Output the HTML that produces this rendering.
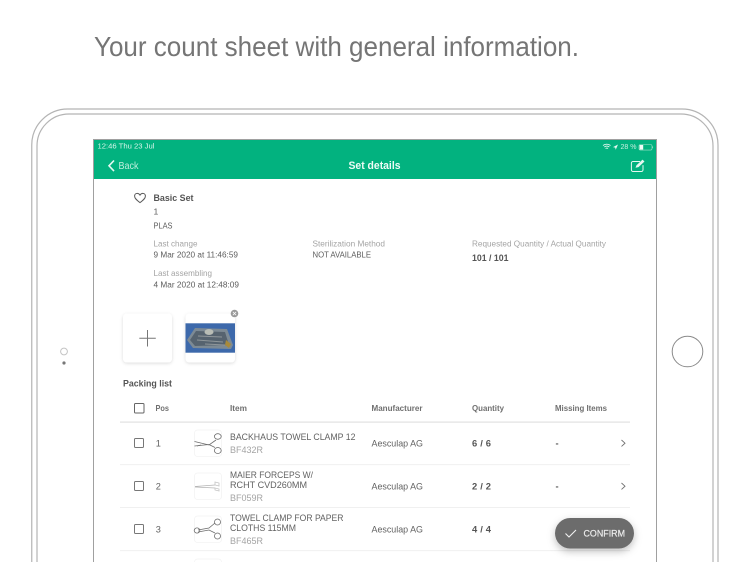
<!DOCTYPE html>
<html>
<head>
<meta charset="utf-8">
<style>
html,body{margin:0;padding:0;background:#fff;width:750px;height:562px;overflow:hidden}
svg{display:block;font-family:"Liberation Sans",sans-serif;filter:blur(.3px)}
.t{font-size:8.6px;fill:#5c5c5c}
.g{font-size:8.6px;fill:#a4a4a4}
.b{font-weight:bold;fill:#555;font-size:9.4px}
.h{font-weight:bold;fill:#707070;font-size:8.4px}
.i{font-size:9.2px;fill:#626262}
</style>
</head>
<body>
<svg width="750" height="562" viewBox="0 0 750 562" xmlns="http://www.w3.org/2000/svg">
<defs>
<filter id="s" x="-30%" y="-30%" width="160%" height="170%"><feDropShadow dx="0" dy="1" stdDeviation="1.5" flood-color="#000" flood-opacity=".14"/></filter>
<filter id="f" x="-30%" y="-50%" width="160%" height="220%"><feDropShadow dx="0" dy="3" stdDeviation="4" flood-color="#000" flood-opacity=".25"/></filter>
<clipPath id="c"><rect x="94" y="140" width="562" height="422"/></clipPath>
</defs>

<text x="94" y="56" font-size="28" fill="#757575" textLength="485" lengthAdjust="spacingAndGlyphs">Your count sheet with general information.</text>

<!-- device -->
<path d="M31.75 562V145a36 36 0 0 1 36-36H682a36 36 0 0 1 36 36V562" fill="none" stroke="#b4b4b4" stroke-width="1.2"/>
<path d="M37 562V146a32 32 0 0 1 32-32H681a32 32 0 0 1 32 32V562" fill="none" stroke="#b4b4b4" stroke-width="1.2"/>
<circle cx="64" cy="351.5" r="3.4" fill="none" stroke="#c4c4c4" stroke-width="1"/>
<circle cx="64" cy="363" r="1.6" fill="#777"/>
<circle cx="687.5" cy="351.5" r="15.3" fill="none" stroke="#8a8a8a" stroke-width="1"/>

<!-- screen -->
<rect x="93.5" y="139.5" width="563" height="430" fill="#fff" stroke="#a0a0a0" stroke-width="1"/>
<rect x="94" y="140" width="562" height="39" fill="#02b27f"/>
<g clip-path="url(#c)">
<text x="97.5" y="148.5" font-size="7" fill="#d8f5ea" textLength="57" lengthAdjust="spacingAndGlyphs">12:46  Thu 23 Jul</text>
<path d="M114 160.5l-5 5.3 5 5.3" fill="none" stroke="#e6f8f1" stroke-width="1.6"/>
<text x="118.5" y="169" font-size="9.8" fill="#bfeedd" textLength="20" lengthAdjust="spacingAndGlyphs">Back</text>
<text x="348.5" y="169" font-size="10.8" font-weight="bold" fill="#eefbf6" textLength="52" lengthAdjust="spacingAndGlyphs">Set details</text>
<!-- status right -->
<path d="M603 145.5a6 6 0 0 1 7.5 0M604.3 147a4 4 0 0 1 5 0M605.6 148.5a2 2 0 0 1 2.4 0" fill="none" stroke="#e6f8f1" stroke-width=".9"/>
<path d="M618 144.5l-5 2.6 2.2.5.5 2.2z" fill="#e6f8f1"/>
<text x="620.5" y="148.8" font-size="7" fill="#c8f0e1" textLength="16" lengthAdjust="spacingAndGlyphs">28 %</text>
<rect x="639" y="144.5" width="13" height="5.6" rx="1.5" fill="none" stroke="#9fe2c9" stroke-width=".6"/>
<rect x="639.6" y="145" width="3.6" height="4.6" fill="#f2fcf8"/>
<path d="M652.7 146.4v1.8" stroke="#9fe2c9" stroke-width=".7"/>
<!-- edit icon -->
<path d="M640 161.5h-7a1.6 1.6 0 0 0-1.6 1.6v6.8a1.6 1.6 0 0 0 1.6 1.6h8.4a1.6 1.6 0 0 0 1.6-1.6v-4.8" fill="none" stroke="#e6f8f1" stroke-width="1"/>
<path d="M635.5 167.8l1-2.6 6-5.6 2 1.9-6 5.6z" fill="#e6f8f1"/>

<!-- heart -->
<path d="M140 202.6c-3.6-2.7-5.4-4.4-5.4-6.5 0-1.6 1.2-2.7 2.6-2.7 1.2 0 2.2.7 2.8 1.7.6-1 1.6-1.7 2.8-1.7 1.4 0 2.6 1.1 2.6 2.7 0 2.1-1.8 3.8-5.4 6.5z" fill="none" stroke="#5a5a5a" stroke-width="1"/>
<text x="153.5" y="200.8" class="b" textLength="40" lengthAdjust="spacingAndGlyphs">Basic Set</text>
<text x="153.5" y="214.5" class="t">1</text>
<text x="153.5" y="228.5" class="t" textLength="19" lengthAdjust="spacingAndGlyphs">PLAS</text>
<text x="153.5" y="246.5" class="g" textLength="44" lengthAdjust="spacingAndGlyphs">Last change</text>
<text x="153.5" y="257.7" class="t" textLength="84.5" lengthAdjust="spacingAndGlyphs">9 Mar 2020 at 11:46:59</text>
<text x="153.5" y="276" class="g" textLength="58.5" lengthAdjust="spacingAndGlyphs">Last assembling</text>
<text x="153.5" y="287.5" class="t" textLength="85.5" lengthAdjust="spacingAndGlyphs">4 Mar 2020 at 12:48:09</text>
<text x="312.5" y="246.5" class="g" textLength="72.5" lengthAdjust="spacingAndGlyphs">Sterilization Method</text>
<text x="312.5" y="257.7" class="t" textLength="58.5" lengthAdjust="spacingAndGlyphs">NOT AVAILABLE</text>
<text x="472" y="246.5" class="g" textLength="134" lengthAdjust="spacingAndGlyphs">Requested Quantity / Actual Quantity</text>
<text x="472" y="261" class="b" textLength="36.5" lengthAdjust="spacingAndGlyphs">101 / 101</text>

<!-- image cards -->
<rect x="123" y="313.5" width="49" height="49" rx="4" fill="#fff" filter="url(#s)"/>
<path d="M147.5 330v16.5M139.3 338.2h16.5" stroke="#777" stroke-width="1"/>
<rect x="185.5" y="313.5" width="49.5" height="49" rx="4" fill="#fff" filter="url(#s)"/>
<rect x="185.5" y="323.3" width="49.5" height="29.4" fill="#3d69ab"/>
<path d="M187 340l8-12 32 1 6 16-2 4-38-1z" fill="#7d8a94"/>
<path d="M190 340l6-9 29 1 4 13-34 1z" fill="#56636f"/>
<ellipse cx="209" cy="332" rx="4.5" ry="3" fill="#b9bdb6"/>
<path d="M198 336l24 1M197 340l26 2M205 344l20 1" stroke="#8f969a" stroke-width="1"/>
<path d="M226 340l5 4-2 4-4-3z" fill="#a98a3a"/>
<circle cx="234.5" cy="313.5" r="3.8" fill="#9a9a9a"/>
<path d="M232.9 311.9l3.2 3.2M236.1 311.9l-3.2 3.2" stroke="#fff" stroke-width=".8"/>

<text x="123" y="386.3" class="b" textLength="49" lengthAdjust="spacingAndGlyphs">Packing list</text>

<!-- table head -->
<rect x="134.5" y="403.5" width="9.5" height="9.5" rx="1" fill="none" stroke="#666" stroke-width="1"/>
<text x="155.5" y="411" class="h" textLength="13.5" lengthAdjust="spacingAndGlyphs">Pos</text>
<text x="230" y="411" class="h" textLength="17" lengthAdjust="spacingAndGlyphs">Item</text>
<text x="371.5" y="411" class="h" textLength="51" lengthAdjust="spacingAndGlyphs">Manufacturer</text>
<text x="472" y="411" class="h" textLength="32" lengthAdjust="spacingAndGlyphs">Quantity</text>
<text x="555" y="411" class="h" textLength="52" lengthAdjust="spacingAndGlyphs">Missing Items</text>
<rect x="120" y="421.5" width="510" height="1.2" fill="#e2e2e2"/>

<!-- rows -->
<g fill="none" stroke="#777" stroke-width="1">
<rect x="134.5" y="438.5" width="9" height="9" rx="1"/>
<rect x="134.5" y="481.5" width="9" height="9" rx="1"/>
<rect x="134.5" y="524.5" width="9" height="9" rx="1"/>
</g>
<text x="155.8" y="446.3" class="i">1</text>
<text x="155.8" y="489.3" class="i">2</text>
<text x="155.8" y="532.5" class="i">3</text>

<g fill="none" stroke="#f3f3f3" stroke-width=".8">
<rect x="194.5" y="430" width="27" height="26.5" rx="3"/>
<rect x="194.5" y="473" width="27" height="26.5" rx="3"/>
<rect x="194.5" y="516" width="27" height="26.5" rx="3"/>
<rect x="194.5" y="559" width="27" height="26.5" rx="3"/>
</g>
<!-- clamp 1 -->
<g fill="none" stroke="#6c6c6c" stroke-width=".8">
<path d="M194.5 441.5l14.5 3.5 7-5M194.5 446l14.5-1.5 6 3"/>
<path d="M201 445l-4 1"/>
<ellipse cx="217.8" cy="436.5" rx="3.4" ry="2.8"/>
<ellipse cx="217.8" cy="450.5" rx="3.4" ry="3"/>
</g>
<!-- forceps 2 -->
<g fill="none" stroke="#b4b4b4" stroke-width=".8">
<path d="M195 486.5l20-1.5M195 487l20 1"/>
<path d="M215 482l4 1v3l-4-1zM215 488l4 1v2l-4-1z" stroke="#c4c4c4"/>
</g>
<!-- clamp 3 -->
<g fill="none" stroke="#6c6c6c" stroke-width=".8">
<path d="M198 530l11-2 6-5M198 532l11-2 6 3"/>
<ellipse cx="197" cy="530.5" rx="2.8" ry="2.6"/>
<ellipse cx="217.5" cy="522" rx="3" ry="3"/>
<ellipse cx="217.5" cy="536" rx="3" ry="3"/>
</g>

<text x="230" y="439.8" class="i" textLength="125.5" lengthAdjust="spacingAndGlyphs">BACKHAUS TOWEL CLAMP 12</text>
<text x="230" y="452.8" class="g" style="font-size:9.2px" textLength="33" lengthAdjust="spacingAndGlyphs">BF432R</text>
<text x="230" y="477.8" class="i" textLength="83" lengthAdjust="spacingAndGlyphs">MAIER FORCEPS W/</text>
<text x="230" y="488.2" class="i" textLength="77" lengthAdjust="spacingAndGlyphs">RCHT CVD260MM</text>
<text x="230" y="500.8" class="g" style="font-size:9.2px" textLength="33" lengthAdjust="spacingAndGlyphs">BF059R</text>
<text x="230" y="520.8" class="i" textLength="113.5" lengthAdjust="spacingAndGlyphs">TOWEL CLAMP FOR PAPER</text>
<text x="230" y="531" class="i" textLength="66" lengthAdjust="spacingAndGlyphs">CLOTHS 115MM</text>
<text x="230" y="544" class="g" style="font-size:9.2px" textLength="33" lengthAdjust="spacingAndGlyphs">BF465R</text>

<text x="371.5" y="446.3" class="i" textLength="51.5" lengthAdjust="spacingAndGlyphs">Aesculap AG</text>
<text x="371.5" y="489.3" class="i" textLength="51.5" lengthAdjust="spacingAndGlyphs">Aesculap AG</text>
<text x="371.5" y="532.5" class="i" textLength="51.5" lengthAdjust="spacingAndGlyphs">Aesculap AG</text>

<text x="472" y="446.3" class="b" textLength="19">6 / 6</text>
<text x="472" y="489.3" class="b" textLength="19">2 / 2</text>
<text x="472" y="532.5" class="b" textLength="19">4 / 4</text>

<text x="555.5" y="446.3" class="b">-</text>
<text x="555.5" y="489.3" class="b">-</text>
<g fill="none" stroke="#707070" stroke-width=".9">
<path d="M621.5 440l3.5 3.2-3.5 3.2"/>
<path d="M621.5 483l3.5 3.2-3.5 3.2"/>
</g>

<rect x="120" y="464.3" width="510" height=".8" fill="#ececec"/>
<rect x="120" y="507.2" width="510" height=".8" fill="#ececec"/>
<rect x="120" y="550.3" width="510" height=".8" fill="#ececec"/>
</g>

<!-- FAB -->
<rect x="555" y="518" width="79" height="30.5" rx="15.2" fill="#6c6c6c" filter="url(#f)"/>
<path d="M565.5 533.5l3.5 3.5 7-7" fill="none" stroke="#f2f2f2" stroke-width="1.1"/>
<text x="583.5" y="536.3" font-size="9" fill="#ececec" stroke="#ececec" stroke-width=".2" textLength="41.5" lengthAdjust="spacingAndGlyphs">CONFIRM</text>
</svg>
</body>
</html>
